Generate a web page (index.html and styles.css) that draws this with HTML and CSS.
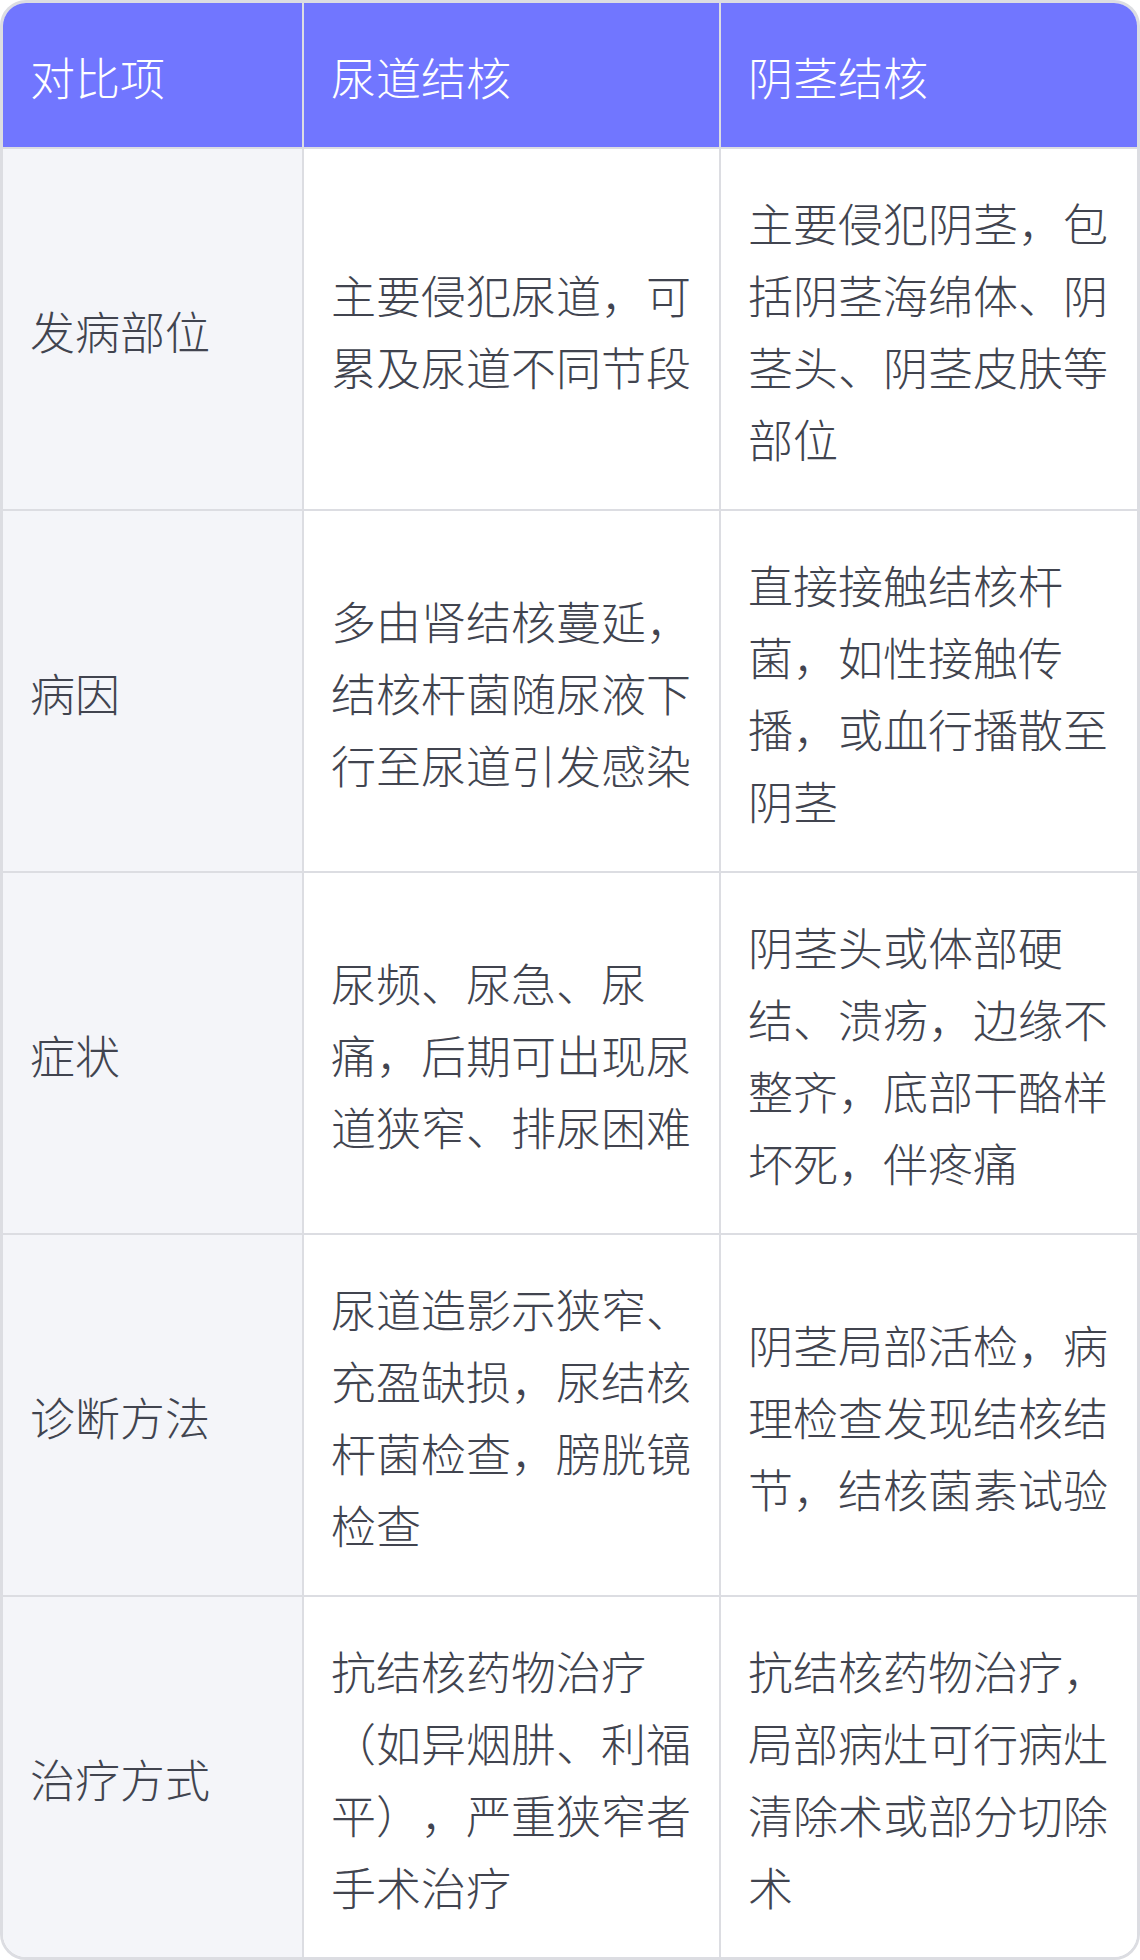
FILE: index.html
```html
<!DOCTYPE html>
<html lang="zh-CN">
<head>
    <meta charset="UTF-8">
    <meta name="viewport" content="width=device-width, initial-scale=1.0">
    <title>尿道结核与阴茎结核对比</title>
    <link rel="stylesheet" href="styles.css">
</head>
<body>
    <div class="table-wrap">
        <table class="compare">
            <colgroup>
                <col class="col-item">
                <col class="col-a">
                <col class="col-b">
            </colgroup>
            <thead>
                <tr>
                    <th>对比项</th>
                    <th>尿道结核</th>
                    <th>阴茎结核</th>
                </tr>
            </thead>
            <tbody>
                <tr>
                    <td>发病部位</td>
                    <td>主要侵犯尿道，可累及尿道不同节段</td>
                    <td>主要侵犯阴茎，包括阴茎海绵体、阴茎头、阴茎皮肤等部位</td>
                </tr>
                <tr>
                    <td>病因</td>
                    <td>多由肾结核蔓延，结核杆菌随尿液下行至尿道引发感染</td>
                    <td>直接接触结核杆菌，如性接触传播，或血行播散至阴茎</td>
                </tr>
                <tr>
                    <td>症状</td>
                    <td>尿频、尿急、尿痛，后期可出现尿道狭窄、排尿困难</td>
                    <td>阴茎头或体部硬结、溃疡，边缘不整齐，底部干酪样坏死，伴疼痛</td>
                </tr>
                <tr>
                    <td>诊断方法</td>
                    <td>尿道造影示狭窄、充盈缺损，尿结核杆菌检查，膀胱镜检查</td>
                    <td>阴茎局部活检，病理检查发现结核结节，结核菌素试验</td>
                </tr>
                <tr>
                    <td>治疗方式</td>
                    <td>抗结核药物治疗（如异烟肼、利福平），严重狭窄者手术治疗</td>
                    <td>抗结核药物治疗，局部病灶可行病灶清除术或部分切除术</td>
                </tr>
            </tbody>
        </table>
    </div>
</body>
</html>
```

FILE: styles.css
```css
body {
    margin: 0;
    background: #fff;
    font-family: "Noto Sans CJK SC", "Noto Sans", sans-serif;
}
.table-wrap {
    width: 1140px;
    box-sizing: border-box;
    border: 3px solid #dcdde2;
    border-radius: 26px;
    overflow: hidden;
}
.compare {
    width: 100%;
    table-layout: fixed;
    border-collapse: separate;
    border-spacing: 0;
    font-size: 45px;
    line-height: 72px;
    font-weight: 300;
    text-spacing-trim: space-all;
}
.col-item {
    width: 301px;
}
.col-a {
    width: 417px;
}
.col-b {
    width: 416px;
}
th, td {
    padding: 38px 26px 34px 27px;
    text-align: left;
    vertical-align: middle;
    border-right: 2px solid #dcdde2;
    border-bottom: 2px solid #dcdde2;
}
th:last-child, td:last-child {
    border-right: none;
}
tbody tr:last-child td {
    border-bottom: none;
}
th {
    background-color: #7176ff;
    color: #fff;
    font-weight: 300;
}
td {
    color: #41444f;
    background-color: #fff;
}
td:first-child {
    background-color: #f4f5f9;
}
```
